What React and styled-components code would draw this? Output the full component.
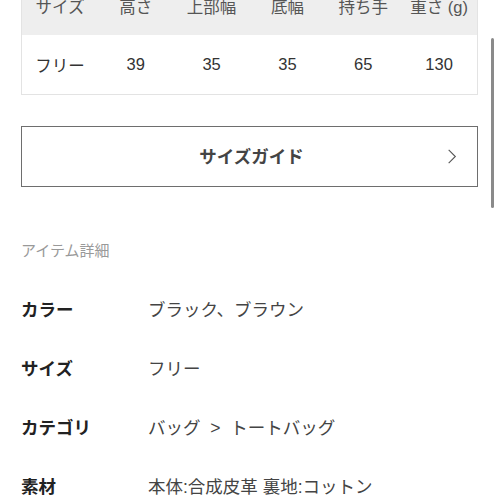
import React from 'react'
import styled, { createGlobalStyle } from 'styled-components'

const GlobalStyle = createGlobalStyle`
  html, body {
    margin: 0;
    padding: 0;
    background: #fff;
    overflow: hidden;
  }
  body {
    font-family: "Liberation Sans", "Noto Sans CJK JP", sans-serif;
    color: #333;
  }
`

const headers = ['サイズ', '高さ', '上部幅', '底幅', '持ち手', '重さ (g)']
const values = ['フリー', '39', '35', '35', '65', '130']

const details = [
  { label: 'カラー', value: 'ブラック、ブラウン' },
  { label: 'サイズ', value: 'フリー' },
  { label: 'カテゴリ', value: 'バッグ  >  トートバッグ' },
  { label: '素材', value: '本体:合成皮革 裏地:コットン' },
]

function App() {
  return (
    <Page>
      <GlobalStyle />
      <SizeTable>
        <TableRow head>
          {headers.map((h) => (
            <Cell key={h} head>{h}</Cell>
          ))}
        </TableRow>
        <TableRow>
          {values.map((v, i) => (
            <Cell key={i}>{v}</Cell>
          ))}
        </TableRow>
      </SizeTable>

      <GuideButton>
        <span>サイズガイド</span>
        <Chevron viewBox="0 0 12 20">
          <path d="M2 2 L10 10 L2 18" />
        </Chevron>
      </GuideButton>

      <SectionTitle>アイテム詳細</SectionTitle>

      <DetailList>
        {details.map((d) => (
          <DetailRow key={d.label}>
            <Label>{d.label}</Label>
            <Value>{d.value}</Value>
          </DetailRow>
        ))}
      </DetailList>

      <ScrollThumb />
    </Page>
  )
}

export default App

const Page = styled.div`
  position: relative;
  width: 500px;
  height: 500px;
  overflow: hidden;
  padding: 0 22px 0 21px;
  box-sizing: border-box;
  display: flex;
  flex-direction: column;
`

const SizeTable = styled.div`
  margin-top: -24px;
  border: 1px solid #e3e3e3;
  display: flex;
  flex-direction: column;
`

const TableRow = styled.div`
  display: grid;
  grid-template-columns: repeat(6, 1fr);
  height: ${(p) => (p.head ? '58px' : '59px')};
  background: ${(p) => (p.head ? '#eeeeee' : '#fff')};
`

const Cell = styled.div`
  display: flex;
  align-items: center;
  justify-content: center;
  font-size: 16.5px;
  color: ${(p) => (p.head ? '#555' : '#333')};
  white-space: pre;
`

const GuideButton = styled.div`
  margin-top: 31px;
  height: 59px;
  border: 1px solid #6e6e6e;
  display: flex;
  align-items: center;
  justify-content: center;
  position: relative;
  font-size: 17.5px;
  font-weight: bold;
  color: #444;

  span {
    margin-left: 4px;
    margin-top: -2px;
  }
`

const Chevron = styled.svg`
  position: absolute;
  right: 20px;
  top: 50%;
  width: 10px;
  height: 17px;
  margin-top: -9px;
  fill: none;
  stroke: #555;
  stroke-width: 1.3;
`

const SectionTitle = styled.div`
  margin-top: 54px;
  font-size: 15px;
  color: #999;
  line-height: 20px;
`

const DetailList = styled.div`
  margin-top: 35px;
  display: flex;
  flex-direction: column;
  gap: 35px;
`

const DetailRow = styled.div`
  display: flex;
  align-items: center;
  height: 24px;
  font-size: 17.5px;
`

const Label = styled.div`
  width: 127px;
  font-weight: bold;
  color: #222;
`

const Value = styled.div`
  color: #444;
  white-space: pre;
`

const ScrollThumb = styled.div`
  position: absolute;
  right: 6px;
  top: 38px;
  width: 3px;
  height: 170px;
  border-radius: 2px;
  background: #8a8a8a;
`
